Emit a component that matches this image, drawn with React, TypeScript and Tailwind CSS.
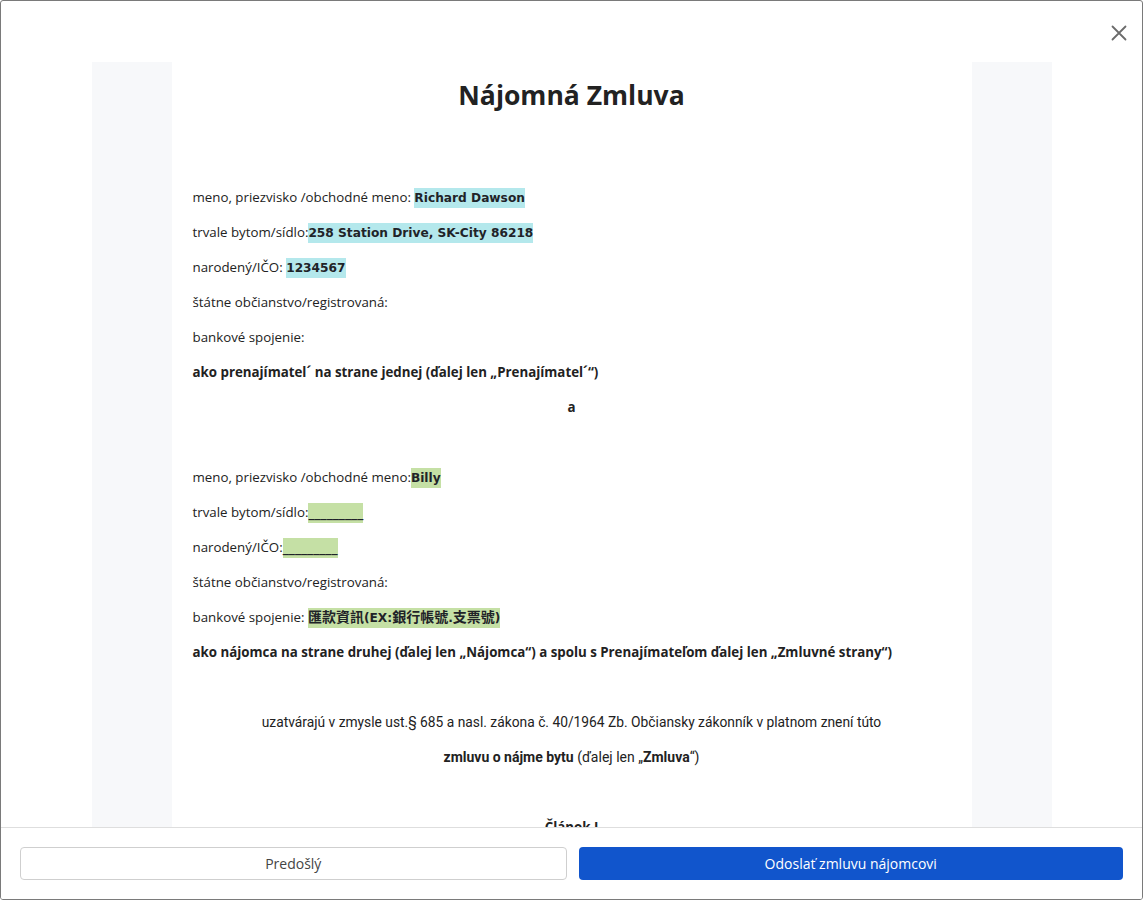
import React from "react";

const doc = { fontFamily: '"Open Sans", "Noto Sans", sans-serif' };
const val = { fontFamily: '"DejaVu Sans", "Noto Sans CJK TC", sans-serif' };
const narrow = { fontFamily: '"Liberation Sans Narrow", "Roboto", sans-serif' };

function Val({ children, green }: { children: React.ReactNode; green?: boolean }) {
  return (
    <span
      style={val}
      className={`font-bold text-[12.2px] py-[3px] text-[#1f2328] ${green ? "bg-[#c5e0a5]" : "bg-[#b4e8ec]"}`}
    >
      {children}
    </span>
  );
}

function P({ children, className = "" }: { children?: React.ReactNode; className?: string }) {
  return <p className={`text-[13.3px] leading-[21px] h-[21px] mb-[14px] whitespace-nowrap ${className}`}>{children}</p>;
}

export default function App() {
  return (
    <div className="w-[1143px] h-[900px] bg-white border border-[#7a7a7a] rounded-[3px] flex flex-col overflow-hidden" style={doc}>
      <div className="relative flex-1 overflow-hidden pt-[61px]">
        <button className="absolute right-[13px] top-[22px] w-[20px] h-[20px] flex items-center justify-center text-[#6b6b6b]">
          <svg width="16" height="16" viewBox="0 0 16 16" fill="none" stroke="currentColor" strokeWidth="1.8" strokeLinecap="round">
            <path d="M1.5 1.5 L14.5 14.5 M14.5 1.5 L1.5 14.5" />
          </svg>
        </button>
        <div className="mx-auto w-[960px] h-full bg-[#f7f8fa] px-[80px]">
          <div className="bg-white h-full px-[21px] pt-[15px] text-[#222]">
            <h1 className="text-center text-[26.5px] font-bold leading-[36px] text-[#222] mb-[74px]">Nájomná Zmluva</h1>
            <P>meno, priezvisko /obchodné meno: <Val>Richard Dawson</Val></P>
            <P>trvale bytom/sídlo:<Val>258 Station Drive, SK-City 86218</Val></P>
            <P>narodený/IČO: <Val>1234567</Val></P>
            <P>štátne občianstvo/registrovaná:</P>
            <P>bankové spojenie:</P>
            <P className="font-bold">ako prenajímatel´ na strane jednej (ďalej len „Prenajímatel´“)</P>
            <P className="font-bold text-center">a</P>
            <P></P>
            <P>meno, priezvisko /obchodné meno:<Val green>Billy</Val></P>
            <P>trvale bytom/sídlo:<Val green>_________</Val></P>
            <P>narodený/IČO:<Val green>_________</Val></P>
            <P>štátne občianstvo/registrovaná:</P>
            <P>
              bankové spojenie:{" "}
              <Val green>
                <span className="text-[14px]">匯款資訊</span>(EX:<span className="text-[14px]">銀行帳號</span>.<span className="text-[14px]">支票號</span>)
              </Val>
            </P>
            <P className="font-bold">ako nájomca na strane druhej (ďalej len „Nájomca“) a spolu s Prenajímateľom ďalej len „Zmluvné strany“)</P>
            <P></P>
            <p style={narrow} className="text-center text-[13.8px] leading-[21px] mb-[14px] text-[#222]">
              uzatvárajú v zmysle ust.§ 685 a nasl. zákona č. 40/1964 Zb. Občiansky zákonník v platnom znení túto
            </p>
            <p style={narrow} className="text-center text-[14px] leading-[21px] mb-[14px] text-[#222]">
              <b>zmluvu o nájme bytu</b> (ďalej len „<b>Zmluva</b>“)
            </p>
            <P></P>
            <P className="font-bold text-center">Článok I</P>
          </div>
        </div>
      </div>
      <div className="h-[72px] shrink-0 border-t border-[#dedede] bg-white flex items-center gap-[12px] px-[19px]">
        <button className="flex-1 h-[33px] rounded-[4px] border border-[#cfcfcf] bg-white text-[14px] text-[#444]">Predošlý</button>
        <button className="flex-1 h-[33px] rounded-[4px] bg-[#1155cc] text-[14px] text-white">Odoslať zmluvu nájomcovi</button>
      </div>
    </div>
  );
}
